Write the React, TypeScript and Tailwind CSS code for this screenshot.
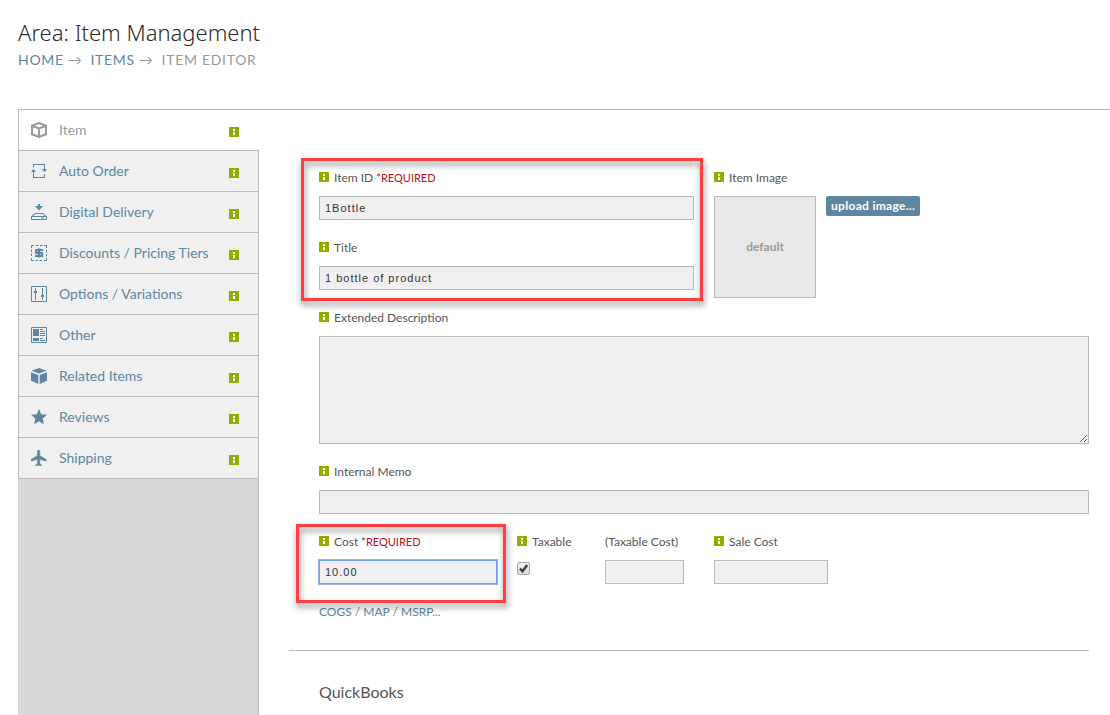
import { useState } from "react";
import type { ReactNode } from "react";
import clsx from "clsx";

const CubeOutlineIcon = () => (
  <svg viewBox="0 0 16 16" className="h-4 w-4" fill="none" stroke="currentColor" strokeWidth="2">
    <path d="M8 1l7 2.6v8.6L8 15l-7-2.800V3.600zM1 3.800l7 2.700 7-2.700M8 6.500V15" />
  </svg>
);

const AutoOrderIcon = () => (
  <svg viewBox="0 0 16 16" className="h-4 w-4" fill="currentColor">
    <path d="M2 1h12v5h2l-2.500 3L11 6h2V2H3v2H2zM2.500 6L5 9H3v5h10v-3h1v4H2V9H0z" />
  </svg>
);

const DownloadIcon = () => (
  <svg viewBox="0 0 16 16" className="h-4 w-4" fill="currentColor">
    <path d="M7 0h2v2h3L8 6.500 4 2h3z" />
    <path fillRule="evenodd" d="M4 9h8l4 3.500V16H0v-3.500zM4.300 10L2 12h12l-2.300-2zM1 13v2h14v-2zM10 13.500h3v1h-3z" />
  </svg>
);

const DiscountIcon = () => (
  <svg viewBox="0 0 16 16" className="h-4 w-4" fill="none" stroke="currentColor">
    <path d="M.5 3V.5H3M5 .5h2.500M9 .5h2.500M13 .5h2.500V3M15.500 5v2.500M15.500 9v2.500M15.500 13v2.500H13M11 15.500H8.500M7 15.500H4.500M3 15.500H.5V13M.5 11V8.500M.5 7V4.500" />
    <path strokeWidth="1.800" d="M12 5H5v3h6.200v3H4" />
    <path strokeWidth="2.600" d="M8 3.500v9" />
  </svg>
);

const SlidersIcon = () => (
  <svg viewBox="0 0 16 16" className="h-4 w-4" fill="none" stroke="currentColor">
    <path d="M.5.5h15v15H.5zM4.500 2v12M11.500 2v12" />
    <path strokeWidth="2" d="M3 6h3M10 10h3" />
  </svg>
);

const NewsIcon = () => (
  <svg viewBox="0 0 16 16" className="h-4 w-4" fill="none" stroke="currentColor">
    <path d="M.5.5h15v15H.5zM9 2.500h3M9 4.500h5M9 6.500h5M9 8.500h5M9 11.500h3M9 13.500h5" />
    <path fill="currentColor" stroke="none" d="M2 2h6v7H2zM2 11h6v3H2z" />
  </svg>
);

const CubeIcon = () => (
  <svg viewBox="0 0 16 16" className="h-4 w-4" fill="currentColor">
    <path d="M8 0l7.500 2.700L8 5.500.5 2.700zM0 4.200l7.300 2.900V16L0 12.800zM16 4.200L8.700 7.100V16l7.300-3.200z" />
  </svg>
);

const StarIcon = () => (
  <svg viewBox="2 2 20 20" className="h-4 w-4" fill="currentColor">
    <path d="M12 17.270L18.180 21l-1.640-7.030L22 9.240l-7.190-.61L12 2 9.190 8.630 2 9.240l5.460 4.730L5.820 21z" />
  </svg>
);

const PlaneIcon = () => (
  <svg viewBox="2 2 20 20" className="h-4 w-4" fill="currentColor" stroke="currentColor" strokeWidth="0.6">
    <path d="M21 16v-2l-8-5V3.500c0-.83-.67-1.500-1.500-1.500S10 2.670 10 3.500V9l-8 5v2l8-2.500V19l-2 1.500V22l3.500-1 3.500 1v-1.500L13 19v-5.500l8 2.500z" />
  </svg>
);

const InfoIcon = () => (
  <svg viewBox="0 0 10 10" className="h-2.5 w-2.5 shrink-0" shapeRendering="crispEdges" aria-hidden="true">
    <path fill="#94ab00" d="M0 0h10v10H0z" />
    <path fill="#fff" d="M4 2h2v2H4zM4 5h2v3H4z" />
  </svg>
);

const tabs: { label: string; icon: ReactNode }[] = [
  { label: "Item", icon: <CubeOutlineIcon /> },
  { label: "Auto Order", icon: <AutoOrderIcon /> },
  { label: "Digital Delivery", icon: <DownloadIcon /> },
  { label: "Discounts / Pricing Tiers", icon: <DiscountIcon /> },
  { label: "Options / Variations", icon: <SlidersIcon /> },
  { label: "Other", icon: <NewsIcon /> },
  { label: "Related Items", icon: <CubeIcon /> },
  { label: "Reviews", icon: <StarIcon /> },
  { label: "Shipping", icon: <PlaneIcon /> },
];

const inputStyle =
  "block h-6 w-full border border-[#b9b9b9] bg-[#f0f0f0] px-[5px] font-['Liberation_Sans',Arial,sans-serif] text-[11px] tracking-[1px] text-[#333] outline-none";

function Field({ id, label, info = true, required, children }: {
  id: string;
  label: string;
  info?: boolean;
  required?: boolean;
  children: ReactNode;
}) {
  return (
    <div>
      <label htmlFor={id} className="mb-2 flex h-5 items-center whitespace-nowrap text-xs text-[#555]">
        {info && <span className="mr-[5px] pb-0.5"><InfoIcon /></span>}
        {label}
        {required && <span className="ml-[3px] text-[11px] text-[#b5121b]">*REQUIRED</span>}
      </label>
      {children}
    </div>
  );
}

function Highlight({ className }: { className: string }) {
  return (
    <div
      className={clsx(
        "pointer-events-none absolute border-3 border-[#ff4040] drop-shadow-[1px_4px_3px_rgba(0,0,0,0.5)]",
        className
      )}
    />
  );
}

export default function App() {
  const [activeTab, setActiveTab] = useState("Item");
  const [taxable, setTaxable] = useState(true);

  return (
    <div className="flex min-h-screen flex-col bg-white pt-[18px] font-[Lato,sans-serif] text-[#555]">
      <header className="mb-10 pl-[18px]">
        <h1 className="font-['Noto_Sans',sans-serif] text-[22px] leading-7 font-light text-[#2b2b2b]">Area: Item Management</h1>
        <nav className="flex h-[23px] items-start pt-0.5 text-sm leading-6 tracking-wider text-[#999]">
          <a href="#home" className="text-[#5d87a1]">HOME</a>
          <span className="mr-2 ml-1">→</span>
          <a href="#items" className="text-[#5d87a1]">ITEMS</a>
          <span className="mr-2 ml-1">→</span>
          <span>ITEM EDITOR</span>
        </nav>
      </header>

      <div className="ml-[18px] flex flex-1 border-t border-[#b9b9b9]">
        <aside className="flex w-[241px] shrink-0 flex-col">
          {tabs.map(tab => (
            <button
              key={tab.label}
              type="button"
              onClick={() => setActiveTab(tab.label)}
              className={clsx(
                "flex h-[41px] items-center border-b border-l border-[#b9b9b9] pl-3 text-left text-sm",
                tab.label === activeTab ? "bg-white pr-5 text-[#999]" : "border-r bg-[#f0f0f0] pr-[19px] text-[#5d87a1]"
              )}
            >
              {tab.icon}
              <span className="ml-3 flex-1">{tab.label}</span>
              <span className="pt-1"><InfoIcon /></span>
            </button>
          ))}
          <div className="flex-1 border-r border-[#b9b9b9] bg-[#d8d8d8]" />
        </aside>

        <main className="min-w-0 flex-1 pt-[58px] pr-[21px] pl-[30px]">
          <form className="flex flex-col gap-[18px] pl-[30px]" onSubmit={e => e.preventDefault()}>
            <div className="grid grid-cols-2 gap-5">
              <div className="relative flex flex-col gap-[18px]">
                <Field id="item-id" label="Item ID" required>
                  <input id="item-id" defaultValue="1Bottle" className={inputStyle} />
                </Field>
                <Field id="title" label="Title">
                  <input id="title" defaultValue="1 bottle of product" className={inputStyle} />
                </Field>
                <Highlight className="-top-2.5 -right-[9px] -bottom-[11px] -left-[18px]" />
              </div>
              <Field id="upload" label="Item Image">
                <div className="flex h-0 items-start gap-2.5">
                  <div className="flex h-[102px] w-[102px] items-center justify-center border border-[#b9b9b9] bg-[#e9e9e9] text-xs font-bold text-[#999]">
                    default
                  </div>
                  <button
                    id="upload"
                    type="button"
                    className="h-5 rounded-xs bg-[#5d87a1] px-[5px] text-xs font-bold tracking-wide text-white"
                  >
                    upload image...
                  </button>
                </div>
              </Field>
            </div>

            <Field id="description" label="Extended Description">
              <textarea id="description" className={clsx(inputStyle, "h-[108px]! resize")} />
            </Field>
            <Field id="memo" label="Internal Memo">
              <input id="memo" className={inputStyle} />
            </Field>

            <div className="grid grid-cols-2 gap-5">
              <div className="grid grid-cols-[1fr_68px_79px] gap-x-5 pr-2.5">
                <div className="relative">
                  <Field id="cost" label="Cost" required>
                    <input
                      id="cost"
                      autoFocus
                      defaultValue="10.00"
                      className={clsx(inputStyle, "border-[#6f9fee]! ring-1 ring-[#8db4f5]")}
                    />
                  </Field>
                  <Highlight className="-top-2 -right-[9px] -bottom-[19px] -left-[23px]" />
                </div>
                <Field id="taxable" label="Taxable">
                  <span className="relative mt-2.5 block h-[13px] w-[13px]">
                    <input
                      id="taxable"
                      type="checkbox"
                      checked={taxable}
                      onChange={e => setTaxable(e.target.checked)}
                      className="block h-[13px] w-[13px] appearance-none rounded-xs border border-[#a5a5a5] bg-linear-to-b from-[#eee] to-[#ddd]"
                    />
                    {taxable && (
                      <svg viewBox="0 0 13 13" className="pointer-events-none absolute inset-0" fill="none" stroke="#404040" strokeWidth="2.4">
                        <path d="M3 6.500l2.500 2.800L10.200 3" />
                      </svg>
                    )}
                  </span>
                </Field>
                <Field id="taxable-cost" label="(Taxable Cost)" info={false}>
                  <input id="taxable-cost" className={inputStyle} />
                </Field>
              </div>
              <Field id="sale-cost" label="Sale Cost">
                <input id="sale-cost" className={clsx(inputStyle, "max-w-[114px]")} />
              </Field>
            </div>

            <a href="#cogs" className="h-5 self-start text-xs leading-5 text-[#5d87a1]">COGS / MAP / MSRP...</a>
          </form>
          <hr className="mt-7 border-[#b9b9b9]" />
          <h2 className="mt-[31px] pl-[30px] text-base leading-5">QuickBooks</h2>
        </main>
      </div>
    </div>
  );
}
